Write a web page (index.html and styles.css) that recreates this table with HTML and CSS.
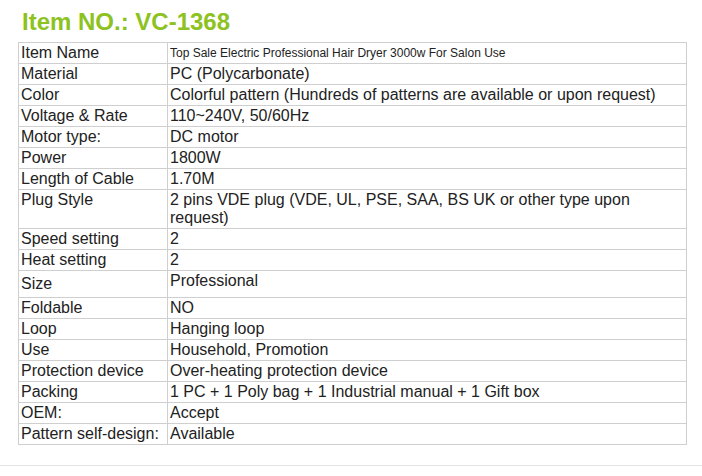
FILE: index.html
```html
<!DOCTYPE html>
<html>
<head>
<meta charset="utf-8">
<link rel="stylesheet" href="styles.css">
</head>
<body>
<div class="page">
  <h1 class="title">Item NO.: VC-1368</h1>
  <table class="spec">
    <tr><td class="k">Item Name</td><td class="v small">Top Sale Electric Professional Hair Dryer 3000w For Salon Use</td></tr>
    <tr><td class="k">Material</td><td class="v">PC (Polycarbonate)</td></tr>
    <tr><td class="k">Color</td><td class="v">Colorful pattern (Hundreds of patterns are available or upon request)</td></tr>
    <tr><td class="k">Voltage &amp; Rate</td><td class="v">110~240V, 50/60Hz</td></tr>
    <tr><td class="k">Motor type:</td><td class="v">DC motor</td></tr>
    <tr><td class="k">Power</td><td class="v">1800W</td></tr>
    <tr><td class="k">Length of Cable</td><td class="v">1.70M</td></tr>
    <tr><td class="k top">Plug Style</td><td class="v">2 pins VDE plug (VDE, UL, PSE, SAA, BS UK or other type upon request)</td></tr>
    <tr><td class="k">Speed setting</td><td class="v">2</td></tr>
    <tr><td class="k">Heat setting</td><td class="v">2</td></tr>
    <tr class="tall"><td class="k">Size</td><td class="v top">Professional</td></tr>
    <tr><td class="k">Foldable</td><td class="v">NO</td></tr>
    <tr><td class="k">Loop</td><td class="v">Hanging loop</td></tr>
    <tr><td class="k">Use</td><td class="v">Household, Promotion</td></tr>
    <tr><td class="k">Protection device</td><td class="v">Over-heating protection device</td></tr>
    <tr><td class="k">Packing</td><td class="v">1 PC + 1 Poly bag + 1 Industrial manual + 1 Gift box</td></tr>
    <tr><td class="k">OEM:</td><td class="v">Accept</td></tr>
    <tr><td class="k">Pattern self-design:</td><td class="v">Available</td></tr>
  </table>
</div>
<div class="rule"></div>
</body>
</html>
```
FILE: styles.css
```css
html, body {
  margin: 0;
  padding: 0;
  background: #fff;
}
body {
  font-family: "Liberation Sans", Arial, sans-serif;
  color: #222;
}
.page {
  padding: 0 0 0 18px;
  height: 465px;
  box-sizing: border-box;
}
.title {
  margin: 0;
  padding: 8px 0 0 4px;
  height: 42px;
  box-sizing: border-box;
  font-size: 24px;
  line-height: 28px;
  font-weight: bold;
  color: #8dc21f;
}
.spec {
  border-collapse: collapse;
  width: 669px;
  font-size: 16px;
  line-height: 18px;
}
.spec td {
  border: 1px solid #cfcfcf;
  padding: 1px 2px;
  vertical-align: middle;
}
.spec .k {
  width: 144px;
}
.spec .small {
  font-size: 12px;
}
.spec .tall td {
  height: 24px;
}
.spec .top {
  vertical-align: top;
}
.rule {
  border-top: 1px solid #e3e3e3;
}
```
